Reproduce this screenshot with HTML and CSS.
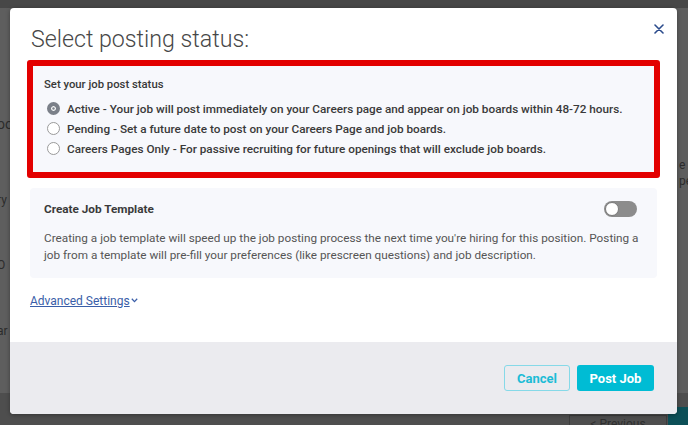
FILE: index.html
```html
<!DOCTYPE html>
<html lang="en">
<head>
<meta charset="utf-8">
<title>Select posting status</title>
<link rel="stylesheet" href="styles.css">
</head>
<body>
<div class="page">
  <div class="page-header"></div>
  <div class="page-main">
    <div class="page-left">
      <div class="frag f1">ooc</div>
      <div class="frag f2">ry</div>
      <div class="frag f3">O</div>
      <div class="frag f4">ar</div>
    </div>
    <div class="page-right">
      <div class="frag r1">e f</div>
      <div class="frag">pe</div>
    </div>
  </div>
  <div class="page-footer">
    <span class="prev-btn">&lt; Previous</span>
    <span class="next-btn"></span>
  </div>
</div>

<div class="modal" role="dialog" aria-labelledby="modal-title">
  <button class="close" aria-label="Close">
    <svg width="10" height="10" viewBox="0 0 10 10"><path d="M1 1 L9 9 M9 1 L1 9" stroke="#2b4b8c" stroke-width="1.6" stroke-linecap="round"/></svg>
  </button>
  <div class="modal-body">
    <h1 class="title" id="modal-title">Select posting status:</h1>
    <section class="status-box">
      <h2 class="status-head">Set your job post status</h2>
      <ul class="radios">
        <li class="radio-row"><span class="radio checked"></span>Active - Your job will post immediately on your Careers page and appear on job boards within 48-72 hours.</li>
        <li class="radio-row"><span class="radio"></span>Pending - Set a future date to post on your Careers Page and job boards.</li>
        <li class="radio-row"><span class="radio"></span>Careers Pages Only - For passive recruiting for future openings that will exclude job boards.</li>
      </ul>
    </section>
    <section class="template-box">
      <div class="template-head">
        <h3 class="template-title">Create Job Template</h3>
        <span class="toggle"><span class="knob"></span></span>
      </div>
      <p class="template-desc">Creating a job template will speed up the job posting process the next time you're hiring for this position. Posting a job from a template will pre-fill your preferences (like prescreen questions) and job description.</p>
    </section>
    <a class="adv" href="#">Advanced Settings</a><svg class="chev" width="7" height="5" viewBox="0 0 7 5"><path d="M0.8 0.8 L3.5 3.6 L6.2 0.8" fill="none" stroke="#3a5ea8" stroke-width="1.3"/></svg>
  </div>
  <div class="modal-footer">
    <button class="btn btn-cancel">Cancel</button>
    <button class="btn btn-post">Post Job</button>
  </div>
</div>
</body>
</html>
```
FILE: styles.css
```css
* { box-sizing: border-box; }
html, body { margin: 0; padding: 0; }
body {
  width: 688px;
  height: 425px;
  overflow: hidden;
  font-family: Roboto, "Liberation Sans", sans-serif;
  position: relative;
  background: #5d5d5d;
}

/* dimmed page behind the dialog */
.page {
  height: 425px;
  display: flex;
  flex-direction: column;
}
.page-header { height: 8px; background: #474747; }
.page-main {
  flex: 1;
  display: flex;
  justify-content: space-between;
  background: #5e5e5e;
}
.page-left { width: 10px; overflow: hidden; }
.page-right { width: 11px; overflow: hidden; padding-left: 2px; }
.frag {
  font-size: 12px;
  line-height: 16px;
  color: #2c2c2c;
  white-space: nowrap;
}
.page-left .frag { text-indent: -3px; }
.f1 { margin-top: 108px; font-size: 14px; }
.f2 { margin-top: 60px; }
.f3 { margin-top: 49px; }
.f4 { margin-top: 50px; }
.r1 { margin-top: 149px; }
.page-footer {
  height: 32px;
  background: #4e4e4e;
  display: flex;
  justify-content: flex-end;
  align-items: flex-start;
  padding-top: 22px;
}
.prev-btn {
  width: 98px;
  height: 14px;
  border: 1px solid #3d3d3d;
  border-bottom: 0;
  margin-right: 1px;
  font-size: 12px;
  color: #2f2f2f;
  text-align: center;
  line-height: 16px;
  overflow: hidden;
}
.next-btn {
  width: 20px;
  height: 18px;
  margin-top: -8px;
  background: #0c4f57;
}

/* dialog */
.modal {
  position: absolute;
  left: 10px;
  top: 8px;
  width: 667px;
  height: 406px;
  background: #fff;
  border-radius: 4px;
  box-shadow: 0 1px 4px rgba(0,0,0,0.35);
  display: flex;
  flex-direction: column;
  overflow: hidden;
}
.close {
  position: absolute;
  right: 12px;
  top: 15px;
  width: 12px;
  height: 12px;
  padding: 1px;
  border: 0;
  background: none;
  display: flex;
}
.modal-body {
  flex: 1;
  padding: 15.5px 20px 0 20px;
}
.title {
  margin: 0;
  padding-left: 1px;
  font-size: 23.2px;
  line-height: 30px;
  font-weight: 300;
  color: #474747;
}
.status-box {
  margin: 6px -3px 0 -3px;
  border: 6px solid #e30000;
  border-radius: 3px;
  background: #f7f8fc;
  padding: 11px 11px 13px 11px;
}
.status-head {
  margin: 0;
  font-size: 11.3px;
  line-height: 16px;
  font-weight: 500;
  color: #383838;
}
.radios {
  list-style: none;
  margin: 6px 0 0 0;
  padding: 0;
}
.radio-row {
  display: flex;
  align-items: center;
  font-size: 11.75px;
  line-height: 20px;
  font-weight: 500;
  color: #3a3a3a;
  white-space: nowrap;
}
.radio {
  width: 13px;
  height: 13px;
  margin: 0 7px 0 3px;
  border-radius: 50%;
  border: 1px solid #9a9a9a;
  background: #fff;
  flex: none;
}
.radio.checked {
  border: 4px solid #7b8089;
  background: #7b8089;
  box-shadow: inset 0 0 0 1.2px #fff;
}
.template-box {
  margin-top: 10px;
  background: #f7f8fc;
  border-radius: 4px;
  padding: 13.5px 20px 14px 14px;
}
.template-head {
  display: flex;
  justify-content: space-between;
  align-items: center;
}
.template-title {
  margin: 0;
  font-size: 11.75px;
  line-height: 16px;
  font-weight: 700;
  color: #3a3a3a;
}
.toggle {
  width: 33px;
  height: 16px;
  border-radius: 8px;
  background: #8c8c8c;
  display: flex;
  align-items: center;
  padding-left: 1px;
}
.knob {
  width: 14px;
  height: 14px;
  border-radius: 50%;
  background: #fff;
  border: 1px solid #7a7a7a;
}
.template-desc {
  margin: 12.5px -10px 0 0;
  font-size: 11.75px;
  line-height: 17px;
  color: #555;
}
.adv {
  display: inline-block;
  margin-top: 15px;
  font-size: 12px;
  line-height: 16px;
  color: #3a5ea8;
  text-decoration: underline;
  text-underline-offset: 1px;
}
.chev { margin-left: 1px; vertical-align: 2px; }
.modal-footer {
  height: 72px;
  background: #ebebef;
  display: flex;
  justify-content: flex-end;
  align-items: flex-start;
  gap: 7px;
  padding: 23px 23px 0 0;
}
.btn {
  height: 26px;
  border-radius: 3px;
  font-family: Roboto, "Liberation Sans", sans-serif;
  font-size: 13px;
  font-weight: 700;
  padding: 0;
}
.btn-cancel {
  width: 66px;
  background: transparent;
  border: 1px solid #86d9e8;
  color: #1bbcd6;
}
.btn-post {
  width: 77px;
  background: #00bcd4;
  border: 0;
  color: #fff;
}
```
